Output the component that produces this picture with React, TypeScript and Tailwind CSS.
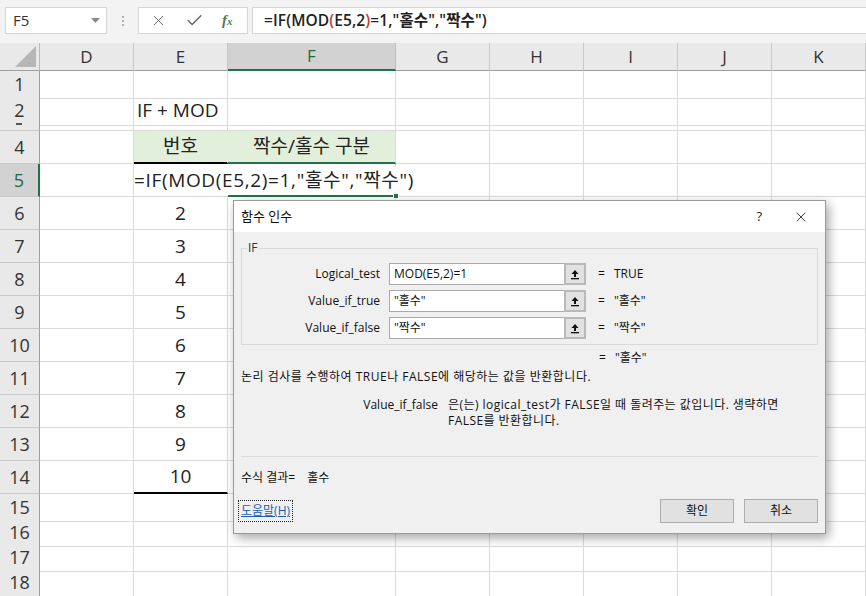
import { X, Check } from "lucide-react";

const COLS = "grid grid-cols-[40px_94px_94px_168px_94px_94px_94px_94px_94px]";
const LETTERS = ["D", "E", "F", "G", "H", "I", "J", "K"];
const FONT = "font-['Open_Sans','Noto_Sans_CJK_KR',sans-serif]";

const ROWS: { n: number; h: string }[] = [
  { n: 1, h: "h-[25px]" },
  { n: 2, h: "h-[25px]" },
  { n: 3, h: "h-[10px]" },
  { n: 4, h: "h-[33px]" },
  { n: 5, h: "h-[33px]" },
  ...[6, 7, 8, 9, 10, 11, 12, 13, 14].map((n) => ({ n, h: "h-[33px]" })),
  ...[15, 16, 17, 18].map((n) => ({ n, h: "h-[25px]" })),
];

function Formula() {
  return (
    <span>
      =IF(MOD<span className="text-[#c0392b]">(</span>E5,2<span className="text-[#c0392b]">)</span>=1,"홀수","짝수")
    </span>
  );
}

function FormulaBar() {
  return (
    <div className={`h-[43px] bg-[#f3f3f3] flex items-start pt-[7px] ${FONT}`}>
      <div className="ml-[5px] w-[102px] h-[27px] bg-white border border-[#d4d4d4] flex items-center justify-between pl-[7px] pr-[6px]">
        <span className="text-[15px] text-[#333]">F5</span>
        <svg width="9" height="6" viewBox="0 0 9 6">
          <polygon points="0,0 9,0 4.5,5" fill="#8a8a8a" />
        </svg>
      </div>
      <div className="w-[31px] h-[27px] flex flex-col items-center justify-center gap-[2px]">
        <div className="w-[2px] h-[2px] bg-[#b0b0b0]" />
        <div className="w-[2px] h-[2px] bg-[#b0b0b0]" />
        <div className="w-[2px] h-[2px] bg-[#b0b0b0]" />
      </div>
      <div className="w-[110px] h-[27px] bg-white border border-[#d4d4d4] flex items-center pl-[11px] gap-[18px] text-[#6b6b6b]">
        <X size={17} strokeWidth={1.4} />
        <Check size={19} strokeWidth={2} />
        <span className="font-['Liberation_Serif',serif] italic text-[15px] text-[#4f7a5a] font-semibold">
          f<span className="text-[11px]">x</span>
        </span>
      </div>
      <div className="ml-[4px] flex-1 h-[27px] bg-white border border-[#d4d4d4] border-r-0 flex items-center pl-[11px]">
        <span className="text-[15.5px] font-semibold text-[#222] tracking-[0.1px]">
          <Formula />
        </span>
      </div>
    </div>
  );
}

function ColumnHeader() {
  return (
    <div className={`${COLS} h-[28px] ${FONT}`}>
      <div className="bg-[#e9e9e9] border-r border-b border-r-[#bcbcbc] border-b-[#9e9e9e] flex items-end justify-end pr-[3px] pb-[3px]">
        <svg width="21" height="21" viewBox="0 0 21 21">
          <polygon points="21,0 21,21 0,21" fill="#b7b7b7" />
        </svg>
      </div>
      {LETTERS.map((l) => (
        <div
          key={l}
          className={
            l === "F"
              ? "bg-[#d2d2d2] border-r border-r-[#bcbcbc] border-b-2 border-b-[#217346] flex items-center justify-center text-[17px] text-[#1e6b41]"
              : "bg-[#e9e9e9] border-r border-b border-r-[#c8c8c8] border-b-[#9e9e9e] flex items-center justify-center text-[17px] text-[#333]"
          }
        >
          {l}
        </div>
      ))}
    </div>
  );
}

function cellClass(r: number, c: number) {
  let cls = "border-r border-b border-[#dadada] flex items-center min-w-0";
  if (r === 4 && c === 1) cls = "bg-[#e2efda] border-r border-r-[#e2efda] border-b-2 border-b-black flex items-center justify-center";
  else if (r === 4 && c === 2) cls = "bg-[#e2efda] border-r border-r-[#dadada] border-b-2 border-b-[#217346] flex items-center justify-center";
  else if (r === 5 && c === 1) cls = "border-b border-[#dadada] flex items-center relative z-10";
  else if (r === 5 && c === 2) cls = "border-b-2 border-b-[#217346] border-r border-r-[#dadada] relative";
  else if (r === 14 && c === 1) cls = "border-r border-r-[#dadada] border-b-2 border-b-black flex items-center justify-center";
  else if (r >= 6 && r <= 13 && c === 1) cls += " justify-center";
  return cls;
}

function cellContent(r: number, c: number) {
  if (c !== 1 && !(r === 4 && c === 2) && !(r === 5 && c === 2)) return null;
  if (r === 2) return <span className="pl-[3px] whitespace-nowrap">IF + MOD</span>;
  if (r === 4 && c === 1) return "번호";
  if (r === 4 && c === 2) return "짝수/홀수 구분";
  if (r === 5 && c === 1)
    return (
      <span className="whitespace-nowrap bg-white pr-[2px] tracking-[0.65px]">
        =IF(MOD(E5,2)=1,"홀수","짝수")
      </span>
    );
  if (r === 5 && c === 2)
    return <div className="absolute right-[-4px] bottom-[-4px] w-[6px] h-[6px] bg-[#217346] border border-white" />;
  if (r >= 6 && r <= 14) return String(r - 4);
  return null;
}

function Sheet() {
  return (
    <div className={`flex flex-col ${FONT}`}>
      {ROWS.map(({ n, h }) => (
        <div key={n} className={`${COLS} ${h}`}>
          <div
            className={
              n === 5
                ? "bg-[#d2d2d2] border-r-2 border-r-[#217346] border-b border-b-[#c8c8c8] flex items-center justify-center text-[18px] text-[#1e6b41]"
                : n === 3
                ? "bg-[#e9e9e9] border-r border-r-[#9e9e9e] border-b border-b-[#c8c8c8] overflow-hidden flex justify-center items-start pt-[2px]"
                : "bg-[#e9e9e9] border-r border-b border-r-[#9e9e9e] border-b-[#c8c8c8] flex items-center justify-center text-[18px] text-[#333]"
            }
          >
            {n === 3 ? <div className="w-[6px] h-[2px] bg-[#555] -ml-[2px]" /> : n}
          </div>
          {LETTERS.map((_, c) => (
            <div key={c} className={`${cellClass(n, c)} text-[19px] text-[#222]`}>
              {cellContent(n, c)}
            </div>
          ))}
        </div>
      ))}
    </div>
  );
}

function RefButton() {
  return (
    <div className="w-[22px] h-[22px] bg-[#e1e1e1] border-2 border-[#b9b9b9] flex items-center justify-center">
      <svg width="10" height="11" viewBox="0 0 10 11">
        <path d="M5 1 L1.5 5 H4 V8 H6 V5 H8.5 Z" fill="#111" />
        <rect x="1" y="9" width="8" height="1.3" fill="#111" />
      </svg>
    </div>
  );
}

function ArgRow({ label, value, result }: { label: string; value: string; result: string }) {
  return (
    <div className="flex items-center h-[22px]">
      <div className="w-[138px] text-right">{label}</div>
      <div className="ml-[9px] w-[175px] h-[22px] bg-white border border-[#a9a9a9] border-r-0 flex items-center pl-[4px]">
        {value}
      </div>
      <RefButton />
      <span className="ml-[12px]">=</span>
      <span className="ml-[9px]">{result}</span>
    </div>
  );
}

function Dialog() {
  return (
    <div
      className={`absolute left-[233px] top-[200px] w-[593px] h-[334px] bg-[#f0f0f0] border border-[#9a9a9a] shadow-[3px_4px_10px_rgba(0,0,0,0.35)] flex flex-col text-[12px] text-[#111] ${FONT}`}
    >
      <div className="h-[31px] bg-white flex items-center pl-[7px] pr-[16px] text-[13px]">
        <span>함수 인수</span>
        <span className="ml-auto text-[13px] text-[#222]">?</span>
        <X className="ml-[31px]" size={16} strokeWidth={1.2} />
      </div>
      <div className="flex flex-col px-[7px]">
        <fieldset className="mt-[10px] border border-[#d9d9d9] h-[103px] px-0 pb-[6px]">
          <legend className="ml-[5px] px-[1px] leading-[12px] text-[12px] text-[#333]">IF</legend>
          <div className="flex flex-col gap-[5px] mt-[9px]">
            <ArgRow label="Logical_test" value="MOD(E5,2)=1" result="TRUE" />
            <ArgRow label="Value_if_true" value={'"홀수"'} result={'"홀수"'} />
            <ArgRow label="Value_if_false" value={'"짝수"'} result={'"짝수"'} />
          </div>
        </fieldset>
        <div className="mt-[5px] h-[16px] pl-[358px] flex items-center">
          <span>=</span>
          <span className="ml-[9px]">"홀수"</span>
        </div>
        <div className="mt-[3px] h-[16px] flex items-center tracking-[0.5px]">
          논리 검사를 수행하여 TRUE나 FALSE에 해당하는 값을 반환합니다.
        </div>
        <div className="mt-[12px] flex">
          <div className="w-[197px] text-right leading-[16px]">Value_if_false</div>
          <div className="ml-[10px] leading-[16px] tracking-[0.45px]">
            은(는) logical_test가 FALSE일 때 돌려주는 값입니다. 생략하면
            <br />
            FALSE를 반환합니다.
          </div>
        </div>
        <div className="mt-[27px] h-px bg-[#dcdcdc]" />
        <div className="mt-[13px] h-[16px] flex items-center">
          <span>수식 결과=</span>
          <span className="ml-[12px]">홀수</span>
        </div>
        <div className="mt-[13px] flex items-center">
          <span className="-ml-[3px] px-[2px] py-[1px] border border-dotted border-[#222] text-[#1a5fb4] underline">
            도움말(H)
          </span>
          <div className="ml-auto flex gap-[10px]">
            <div className="w-[74px] h-[24px] bg-[#e1e1e1] border border-[#adadad] flex items-center justify-center">확인</div>
            <div className="w-[74px] h-[24px] bg-[#e1e1e1] border border-[#adadad] flex items-center justify-center">취소</div>
          </div>
        </div>
      </div>
    </div>
  );
}

export default function App() {
  return (
    <div className="relative w-[866px] h-[596px] overflow-hidden bg-white">
      <FormulaBar />
      <ColumnHeader />
      <Sheet />
      <Dialog />
    </div>
  );
}
